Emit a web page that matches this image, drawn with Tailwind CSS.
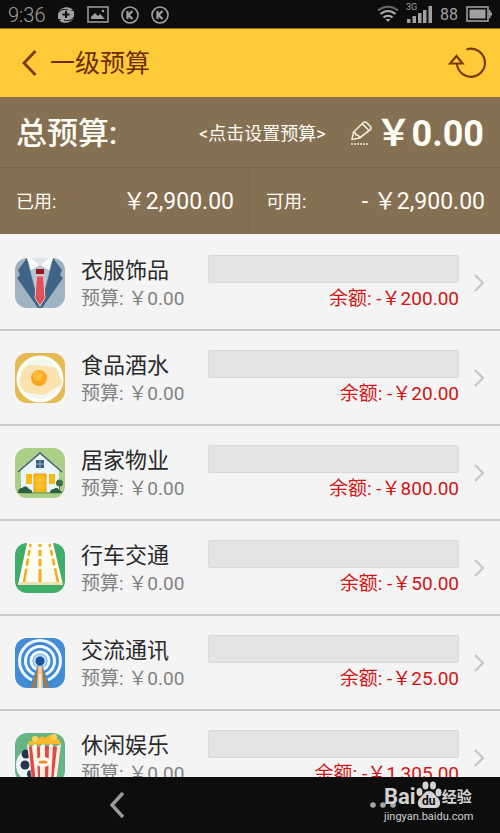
<!DOCTYPE html>
<html lang="zh-CN">
<head>
  <meta charset="UTF-8"/>
  <meta name="viewport" content="width=device-width, initial-scale=1.0"/>
  <title>一级预算</title>
  <script src="https://cdn.jsdelivr.net/npm/@tailwindcss/browser@4"></script>
</head>
<body class="h-screen flex flex-col overflow-hidden bg-[#f4f4f4] font-['Roboto','Noto_Sans_CJK_SC',sans-serif]">

  <!-- Status bar -->
  <div class="h-7 shrink-0 bg-[#0d0d0d] text-[#a0a0a0] flex items-center justify-between pl-2 pr-2">
    <div class="flex items-center gap-3 pt-[2px]">
      <span class="text-xl leading-6 font-light">9:36</span>
      <svg class="w-[18px] h-[18px]" viewBox="0 0 18 18">
        <path d="M1 7C3 1 12-1 16 4l-3 1h4v6c-2 6-11 8-15 3l3-1H1z" fill="#a0a0a0"/>
        <path d="M1 7c3-4 7-4 10-3M17 11c-3 4-7 4-10 3" fill="none" stroke="#0d0d0d" stroke-width="1"/>
        <path d="M9 5v7M5.500 8.500h7" stroke="#0d0d0d" stroke-width="2"/>
      </svg>
      <svg class="w-[22px] h-[18px]" viewBox="0 0 22 18" fill="#a0a0a0">
        <rect x="1" y="1" width="20" height="15" fill="none" stroke="#a0a0a0" stroke-width="1.500"/>
        <path d="M4 13v-2l4-4 3 3 2-2 5 5z"/><circle cx="16" cy="5" r="1.300"/>
      </svg>
      <svg class="w-[18px] h-[18px]" viewBox="0 0 18 18" fill="none" stroke="#a0a0a0">
        <circle cx="9" cy="9" r="8" stroke-width="1.600"/><path d="M6.500 5v8M11.500 5L7.500 9l4 4" stroke-width="2.200"/>
      </svg>
      <svg class="w-[18px] h-[18px]" viewBox="0 0 18 18" fill="none" stroke="#a0a0a0">
        <circle cx="9" cy="9" r="8" stroke-width="1.600"/><path d="M6.500 5v8M11.500 5L7.500 9l4 4" stroke-width="2.200"/>
      </svg>
    </div>
    <div class="flex items-center gap-2">
      <svg class="w-[22px] h-[18px]" viewBox="0 0 22 18" fill="none" stroke="#b0b0b0" stroke-width="2">
        <path d="M1 5.500C7 .5 15 .5 21 5.500" stroke="#6a6a6a"/>
        <path d="M3.500 9C8 5 14 5 18.500 9M6.500 12.500C9 10 13 10 15.500 12.500"/>
        <path d="M8.500 14h5L11 17z" fill="#b0b0b0" stroke="none"/>
      </svg>
      <div class="relative">
        <span class="absolute -left-px -top-1 text-[9px] leading-3">3G</span>
        <svg class="block w-[25px] h-[18px]" viewBox="0 0 25 18" fill="#a0a0a0">
          <path d="M0 14h3.500v4H0zM5.500 11H9v7H5.500zM11 8h3.500v10H11zM16 5h3.500v13H16zM21.500 1H25v17h-3.500z"/>
        </svg>
      </div>
      <span class="text-base leading-6 pt-[2px]">88</span>
      <svg class="w-[26px] h-4" viewBox="0 0 26 16">
        <rect x="1" y="1" width="21" height="14" fill="none" stroke="#a0a0a0" stroke-width="1.600"/>
        <path d="M3.500 3.500h16v9h-16zM23 4h1.500v2.500H26v3h-1.500V12H23z" fill="#a0a0a0"/>
      </svg>
    </div>
  </div>

  <!-- Header -->
  <header class="h-[69px] shrink-0 bg-[#ffca37] border-t border-[#8a6a1c] flex items-center justify-between pl-5 pr-3 text-[#6b2d05]">
    <div class="flex items-center gap-3">
      <button type="button" aria-label="返回">
        <svg class="block w-[18px] h-7" viewBox="0 0 18 28" fill="none" stroke="#7d3a08" stroke-width="2.800"><path d="M15.500 2L4 14l11.500 12"/></svg>
      </button>
      <h1 class="text-[25px] leading-9 pt-[2px]">一级预算</h1>
    </div>
    <button type="button" aria-label="刷新">
      <svg class="block w-10 h-9" viewBox="0 0 40 36" fill="none" stroke="#7d3a08" stroke-width="2.200">
        <path d="M18.500 4.500A14 14 0 1 1 9 19"/><path d="M2 18.500h12.500L8.500 11z"/>
      </svg>
    </button>
  </header>

  <!-- Budget summary -->
  <section class="shrink-0 bg-[#857053] text-[#fffdf5]">
    <div class="h-[71px] flex items-center border-b border-[#78654a] px-4 pt-1">
      <h2 class="flex-1 text-[31px] leading-10 font-medium">总预算:</h2>
      <button type="button" class="flex items-center gap-6 text-lg leading-7">
        <span>&lt;点击设置预算&gt;</span>
        <svg class="w-[22px] h-[26px]" viewBox="0 0 22 26" fill="none" stroke="#f3ecdc" stroke-width="1.600" stroke-linejoin="round">
          <path d="M2 18.500L3.500 11 13.500 1.500q1.500-1 3 0l4 4q1 1.500 0 3L9.500 17zM12.500 3l6.500 6.500M3.500 11.500l2 .5.500 2 2.500.5 1 2.500"/>
          <path d="M1 23h18" stroke-dasharray="2 1"/>
        </svg>
      </button>
      <strong class="text-4xl leading-10 font-bold ml-1">￥0.00</strong>
    </div>
    <div class="h-[66px] grid grid-cols-2">
      <div class="flex items-center justify-between pt-[2px] pl-4 pr-[15px] border-r border-[#78654a]">
        <span class="text-lg">已用:</span>
        <span class="text-[23px]">￥2,900.00</span>
      </div>
      <div class="flex items-center justify-between pt-[2px] pl-4 pr-[15px]">
        <span class="text-lg">可用:</span>
        <span class="text-[23px]">- ￥2,900.00</span>
      </div>
    </div>
  </section>

  <!-- Categories -->
  <main class="flex-1 min-h-0 overflow-hidden pt-[2px]">
    <ul id="budgetList"></ul>
  </main>

  <!-- Navigation bar -->
  <footer class="relative h-14 shrink-0 bg-[#0d0d0d] flex items-center justify-between pl-[108px] pr-[104px]">
    <button type="button" aria-label="后退">
      <svg class="block w-[18px] h-7" viewBox="0 0 18 28" fill="none" stroke="#9a9a9a" stroke-width="3.400"><path d="M15 2L4 14l11 12"/></svg>
    </button>
    <button type="button" aria-label="更多">
      <svg class="block w-[26px] h-2" viewBox="0 0 26 8" fill="#a5a5a5"><circle cx="3" cy="4" r="2.800"/><circle cx="13" cy="4" r="2.800"/><circle cx="23" cy="4" r="2.800"/></svg>
    </button>
    <div class="absolute right-6 top-1 w-[92px] text-[#d2d2d2]">
      <div class="flex items-end h-7">
        <span class="text-[22px] leading-6 font-bold">Bai</span>
        <svg class="w-[26px] h-7 shrink-0" viewBox="0 0 26 28" fill="#d2d2d2">
          <ellipse cx="3.500" cy="11" rx="3" ry="4"/><ellipse cx="9.500" cy="4.500" rx="3" ry="4"/>
          <ellipse cx="17" cy="4.500" rx="3" ry="4"/><ellipse cx="22.500" cy="11.500" rx="3" ry="4"/>
          <path d="M13 10c4 0 5 3 8 6 5 4 4 12-3 11H8c-7 1-8-7-3-11 3-3 4-6 8-6z"/>
          <text x="6" y="24" font-size="12" font-weight="bold" fill="#0d0d0d">du</text>
        </svg>
        <span class="text-[15px] leading-6 font-bold whitespace-nowrap">经验</span>
      </div>
      <p class="text-[11px] leading-4 whitespace-nowrap">jingyan.baidu.com</p>
    </div>
  </footer>

  <script>
    const categories = [
      {
        name: '衣服饰品', budget: '￥0.00', left: '-￥200.00',
        icon: `<rect width="50" height="50" fill="#9fb3c1"/>
          <path d="M13 0h24L25 50z" fill="#b6c4cf"/>
          <path d="M12 0L3 12l2 5-3 3 21 30h2L14 9z" fill="#3f6485"/>
          <path d="M38 0l9 12-2 5 3 3-21 30h-2L36 9z" fill="#3f6485"/>
          <path d="M12 0h26l-4 12-9-5-9 5z" fill="#fff"/>
          <path d="M16 0h18l-9 8z" fill="#dfe7ee"/>
          <path d="M21 11h8v5h-8z" fill="#96151f"/>
          <path d="M21.500 18h7l1.500 22-5 8-5-8z" fill="#e0505a" stroke="#f3d9dc" stroke-width=".8"/>`
      },
      {
        name: '食品酒水', budget: '￥0.00', left: '-￥20.00',
        icon: `<rect width="50" height="50" fill="#e3bb52"/>
          <circle cx="25" cy="26" r="23.500" fill="#fffef8"/><circle cx="25" cy="26" r="20" fill="#f4f6ee"/>
          <path d="M5 25c1-7 5-13 12-13 6 0 13 1 20 2 7 1 6 7 10 14 1 6-7 5-12 10-4 4-8 5-13 3-6-1-11 0-14-4-3-3-4-8-3-12z" fill="#fbe3b0"/>
          <circle cx="24" cy="25" r="8" fill="#fca51e"/><circle cx="23" cy="23" r="5" fill="#fdbb3b"/>`
      },
      {
        name: '居家物业', budget: '￥0.00', left: '-￥800.00',
        icon: `<rect width="50" height="50" fill="#abcf86"/>
          <path d="M6 22L25 6l19 16v23H6z" fill="#e9f4fb"/>
          <path d="M3 24L25 5l22 19" fill="none" stroke="#4a6076" stroke-width="1.500"/>
          <path d="M21 12h8v8h-8z" fill="#395d7d"/><path d="M25 12v8M21 16h8" stroke="#a9c0d2" stroke-width=".8"/>
          <path d="M11 26h6v10h-6zM34 26h6v10h-6z" fill="#fdb813"/>
          <path d="M19 26h12v18H19z" fill="#fdb813" stroke="#e09c17"/><path d="M25 26v18M19 32h12M19 38h12" stroke="#f0d06d" stroke-width=".7"/>
          <path d="M6 45h39" stroke="#8bb36c" stroke-width="2"/>
          <path d="M3 45q0-5 4-5 4-4 7 1 4 1 3 4zM35 45q0-4 4-4 3-3 5 1 3 1 3 3z" fill="#295f43"/>
          <path d="M44.500 34v9" stroke="#7b5934"/><circle cx="44.500" cy="35" r="3.500" fill="#3c7049"/>`
      },
      {
        name: '行车交通', budget: '￥0.00', left: '-￥50.00',
        icon: `<rect width="50" height="50" fill="#3fae6a"/>
          <path d="M12 0h26l10 42H3z" fill="#fffdf0"/><path d="M3 39h44l1 3H3z" fill="#f1dfb1"/>
          <path d="M15.500 1L9 39M34.500 1L43 39" stroke="#f3aa21" stroke-width="2.500" stroke-dasharray="3 3 6 3 7 3 14"/>
          <path d="M25 1v38" stroke="#f3aa21" stroke-width="3" stroke-dasharray="3 3 6 3 7 3 14"/>`
      },
      {
        name: '交流通讯', budget: '￥0.00', left: '-￥25.00',
        icon: `<rect width="50" height="50" fill="#448bd6"/>
          <g fill="none" stroke="#eff8ff" stroke-width="3"><circle cx="25" cy="23" r="20.500"/><circle cx="25" cy="23" r="14.500"/><circle cx="25" cy="23" r="9"/></g>
          <circle cx="25" cy="23" r="7" fill="#b7dbf5"/>
          <path d="M23 27L14 50h22L27 27z" fill="#448bd6"/>
          <circle cx="25" cy="23" r="4.500" fill="#17549b"/>
          <path d="M23 28L16 50h3.500L25 30l5.500 20H34L27 28z" fill="#a17a4c"/><path d="M23 28h4l1 22h-6z" fill="#f6c993"/><path d="M25 36v14" stroke="#fff" stroke-width="1.500"/>`
      },
      {
        name: '休闲娱乐', budget: '￥0.00', left: '-￥1,305.00',
        icon: `<rect width="50" height="50" fill="#67b585"/>
          <circle cx="18" cy="32" r="17" fill="#eef3f7"/>
          <g fill="#25364b"><circle cx="11" cy="21" r="4.500"/><circle cx="10" cy="32" r="4.500"/><circle cx="16" cy="41" r="4"/></g>
          <path d="M13 12q0-5 5-4 1-7 6-3 4-3 6 0 6-6 9 0 6 0 7 6z" fill="#f7b92e"/>
          <circle cx="20" cy="6" r="3" fill="#fdd05c"/><circle cx="39" cy="4" r="3" fill="#fdd05c"/>
          <path d="M12 11l4 3 4-3 4 3 4-3 4 3 4-3 4 3 6-3-5 39H17z" fill="#fff0df"/>
          <path d="M14 13l3 1 4 36h-4zM22 13l3 1v36h-2zM30 13h4l-1 37h-3zM38 13l4 1-4 36h-2z" fill="#dd4a48"/>
          <ellipse cx="28" cy="29" rx="8" ry="5" fill="#fff6e8"/><ellipse cx="28" cy="29" rx="4.500" ry="1.500" fill="#ee8b2d"/>`
      }
    ];

    document.getElementById('budgetList').innerHTML = categories.map(item => `
      <li class="h-[95px] border-b-2 border-[#cbcbcb]">
        <a href="#" class="h-full flex items-center pl-[15px] pr-[15px]">
          <svg class="w-[50px] h-[50px] rounded-xl shrink-0" viewBox="0 0 50 50">${item.icon}</svg>
          <div class="w-[127px] shrink-0 pl-4 pt-1">
            <h3 class="text-[22px] leading-7 text-[#2a2a2a]">${item.name}</h3>
            <p class="text-[19px] leading-7 text-[#828282] whitespace-nowrap">预算: ${item.budget}</p>
          </div>
          <div class="flex-1 ml-4 pt-[2px]">
            <div class="h-7 border border-[#d9d9d9] bg-[#e4e4e4] rounded-xs"></div>
            <p class="mt-[2px] text-[19px] leading-7 text-[#cf1616] text-right whitespace-nowrap">余额: ${item.left}</p>
          </div>
          <svg class="w-3 h-5 ml-[14px] shrink-0" viewBox="0 0 12 20" fill="none" stroke="#c6c6c6" stroke-width="2.200"><path d="M2 2l8 8-8 8"/></svg>
        </a>
      </li>`).join('');
  </script>
</body>
</html>
